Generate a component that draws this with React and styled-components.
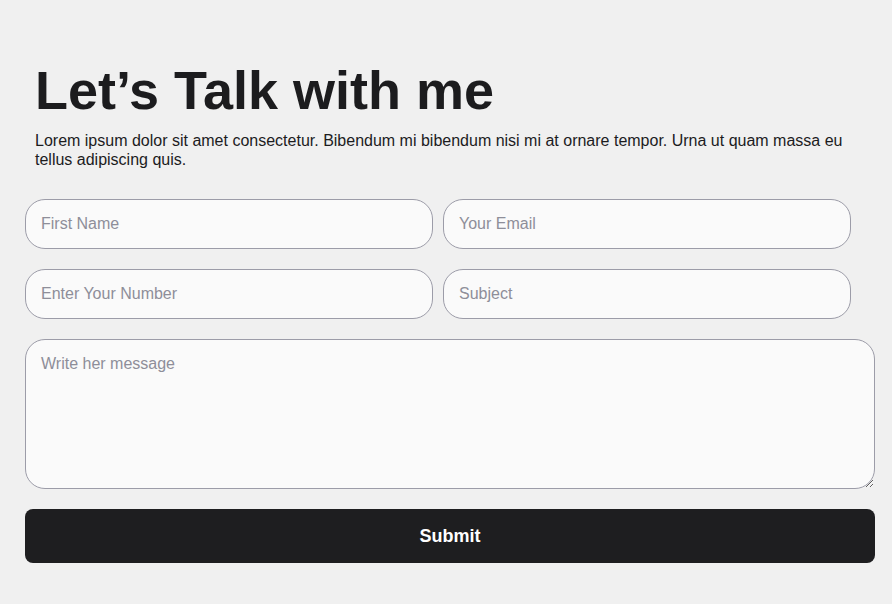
import React from 'react'
import styled, { createGlobalStyle } from 'styled-components'

const GlobalStyle = createGlobalStyle`
  body {
    margin: 0;
    background: #f0f0f0;
    font-family: "Liberation Sans", Arial, sans-serif;
  }
`

const Page = styled.div`
  padding: 59px 17px 40px 25px;
`

const Header = styled.header`
  padding: 0 10px;
  margin-bottom: 30px;

  h1 {
    margin: 0 0 10px;
    font-size: 54px;
    line-height: 62px;
    font-weight: 700;
    color: #1c1c1e;
  }

  p {
    margin: 0;
    font-size: 16px;
    line-height: 19px;
    color: #1c1c1e;
  }
`

const Form = styled.form`
  display: flex;
  flex-wrap: wrap;
  gap: 20px 10px;
`

const Field = styled.input`
  box-sizing: border-box;
  width: 48%;
  height: 50px;
  padding: 0 15px;
  border: 1px solid #9c9ca8;
  border-radius: 20px;
  background: #fafafa;
  font-family: inherit;
  font-size: 16px;
  color: #1c1c1e;
  outline: none;

  &::placeholder {
    color: #8e8e99;
  }
`

const Message = styled.textarea`
  box-sizing: border-box;
  width: 100%;
  height: 150px;
  padding: 15px;
  border: 1px solid #9c9ca8;
  border-radius: 20px;
  background: #fafafa;
  font-family: inherit;
  font-size: 16px;
  color: #1c1c1e;
  outline: none;
  resize: vertical;

  &::placeholder {
    color: #8e8e99;
  }
`

const Submit = styled.button`
  width: 100%;
  height: 54px;
  border: none;
  border-radius: 8px;
  background: #1e1e20;
  color: #fff;
  font-family: inherit;
  font-size: 18px;
  font-weight: 700;
  cursor: pointer;
`

const App = () => {
    return (
        <Page>
            <GlobalStyle />
            <Header>
                <h1>Let’s Talk with me</h1>
                <p>Lorem ipsum dolor sit amet consectetur. Bibendum mi bibendum nisi mi at ornare tempor. Urna ut quam massa eu tellus adipiscing quis.</p>
            </Header>
            <Form onSubmit={e => e.preventDefault()}>
                <Field type="text" placeholder="First Name" />
                <Field type="email" placeholder="Your Email" />
                <Field type="tel" placeholder="Enter Your Number" />
                <Field type="text" placeholder="Subject" />
                <Message placeholder="Write her message" />
                <Submit type="submit">Submit</Submit>
            </Form>
        </Page>
    )
}

export default App
